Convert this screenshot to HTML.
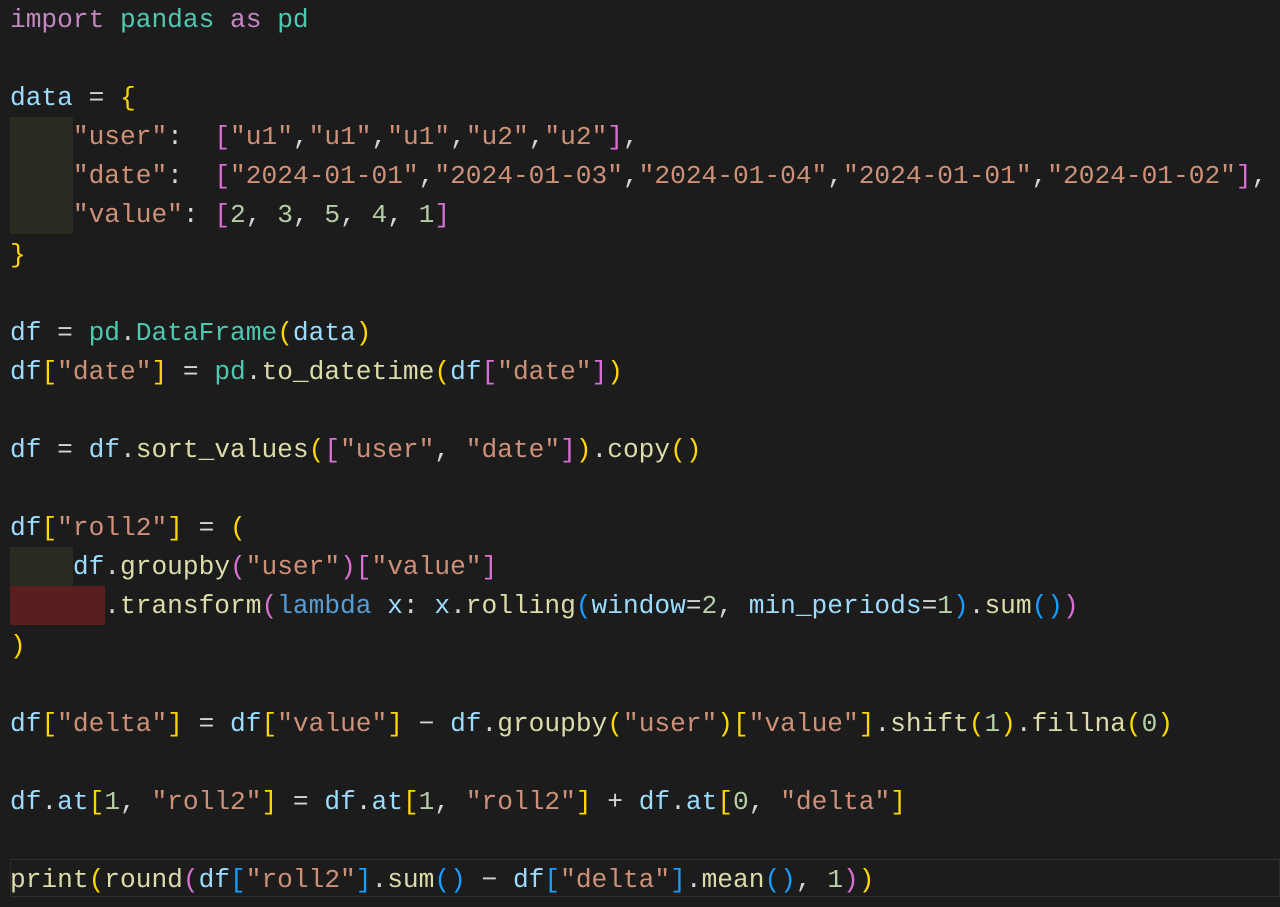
<!DOCTYPE html>
<html><head><meta charset="utf-8"><style>
html,body{margin:0;padding:0;background:#1c1c1c;width:1280px;height:907px;overflow:hidden}
.code{position:absolute;left:10px;top:1px;font-family:"Liberation Mono",monospace;font-size:26.2px;line-height:39.1px;color:#d4d4d4;white-space:pre}
.k{color:#c586c0}.m{color:#4ec9b0}.v{color:#9cdcfe}.s{color:#ce9178}.n{color:#b5cea8}.f{color:#dcdcaa}
.b1{color:#ffd700}.b2{color:#da70d6}.b3{color:#179fff}.l{color:#569cd6}
.hl{position:absolute}
</style></head><body>
<div class="hl" style="left:10px;top:117px;width:63px;height:117px;background:#2a2a21"></div>
<div class="hl" style="left:10px;top:547px;width:63px;height:39px;background:#2a2a21"></div>
<div class="hl" style="left:10px;top:586px;width:95px;height:39px;background:#5a1e1e"></div>
<div class="hl" style="left:10px;top:859px;width:1270px;height:38px;border:1px solid #2e2e2e;box-sizing:border-box"></div>
<div class="code"><span class="k">import</span> <span class="m">pandas</span> <span class="k">as</span> <span class="m">pd</span>

<span class="v">data</span> = <span class="b1">{</span>
    <span class="s">"user"</span>:  <span class="b2">[</span><span class="s">"u1"</span>,<span class="s">"u1"</span>,<span class="s">"u1"</span>,<span class="s">"u2"</span>,<span class="s">"u2"</span><span class="b2">]</span>,
    <span class="s">"date"</span>:  <span class="b2">[</span><span class="s">"2024-01-01"</span>,<span class="s">"2024-01-03"</span>,<span class="s">"2024-01-04"</span>,<span class="s">"2024-01-01"</span>,<span class="s">"2024-01-02"</span><span class="b2">]</span>,
    <span class="s">"value"</span>: <span class="b2">[</span><span class="n">2</span>, <span class="n">3</span>, <span class="n">5</span>, <span class="n">4</span>, <span class="n">1</span><span class="b2">]</span>
<span class="b1">}</span>

<span class="v">df</span> = <span class="m">pd</span>.<span class="m">DataFrame</span><span class="b1">(</span><span class="v">data</span><span class="b1">)</span>
<span class="v">df</span><span class="b1">[</span><span class="s">"date"</span><span class="b1">]</span> = <span class="m">pd</span>.<span class="f">to_datetime</span><span class="b1">(</span><span class="v">df</span><span class="b2">[</span><span class="s">"date"</span><span class="b2">]</span><span class="b1">)</span>

<span class="v">df</span> = <span class="v">df</span>.<span class="f">sort_values</span><span class="b1">(</span><span class="b2">[</span><span class="s">"user"</span>, <span class="s">"date"</span><span class="b2">]</span><span class="b1">)</span>.<span class="f">copy</span><span class="b1">()</span>

<span class="v">df</span><span class="b1">[</span><span class="s">"roll2"</span><span class="b1">]</span> = <span class="b1">(</span>
    <span class="v">df</span>.<span class="f">groupby</span><span class="b2">(</span><span class="s">"user"</span><span class="b2">)</span><span class="b2">[</span><span class="s">"value"</span><span class="b2">]</span>
      .<span class="f">transform</span><span class="b2">(</span><span class="l">lambda</span> <span class="v">x</span>: <span class="v">x</span>.<span class="f">rolling</span><span class="b3">(</span><span class="v">window</span>=<span class="n">2</span>, <span class="v">min_periods</span>=<span class="n">1</span><span class="b3">)</span>.<span class="f">sum</span><span class="b3">()</span><span class="b2">)</span>
<span class="b1">)</span>

<span class="v">df</span><span class="b1">[</span><span class="s">"delta"</span><span class="b1">]</span> = <span class="v">df</span><span class="b1">[</span><span class="s">"value"</span><span class="b1">]</span> − <span class="v">df</span>.<span class="f">groupby</span><span class="b1">(</span><span class="s">"user"</span><span class="b1">)</span><span class="b1">[</span><span class="s">"value"</span><span class="b1">]</span>.<span class="f">shift</span><span class="b1">(</span><span class="n">1</span><span class="b1">)</span>.<span class="f">fillna</span><span class="b1">(</span><span class="n">0</span><span class="b1">)</span>

<span class="v">df</span>.<span class="v">at</span><span class="b1">[</span><span class="n">1</span>, <span class="s">"roll2"</span><span class="b1">]</span> = <span class="v">df</span>.<span class="v">at</span><span class="b1">[</span><span class="n">1</span>, <span class="s">"roll2"</span><span class="b1">]</span> + <span class="v">df</span>.<span class="v">at</span><span class="b1">[</span><span class="n">0</span>, <span class="s">"delta"</span><span class="b1">]</span>

<span class="f">print</span><span class="b1">(</span><span class="f">round</span><span class="b2">(</span><span class="v">df</span><span class="b3">[</span><span class="s">"roll2"</span><span class="b3">]</span>.<span class="f">sum</span><span class="b3">()</span> − <span class="v">df</span><span class="b3">[</span><span class="s">"delta"</span><span class="b3">]</span>.<span class="f">mean</span><span class="b3">()</span>, <span class="n">1</span><span class="b2">)</span><span class="b1">)</span></div>
</body></html>
